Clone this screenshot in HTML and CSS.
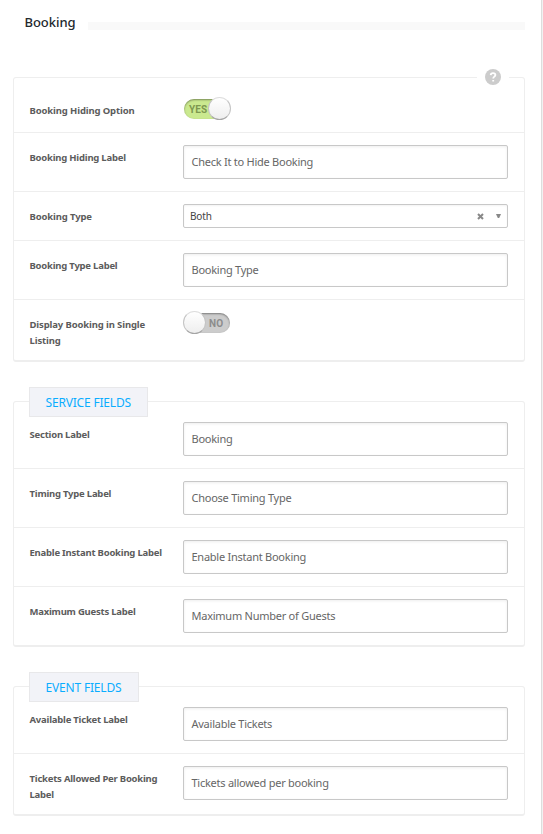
FILE: index.html
```html
<!DOCTYPE html>
<html lang="en">
<head>
<meta charset="utf-8">
<title>Booking</title>
<link rel="stylesheet" href="styles.css">
</head>
<body>
<main class="page">
  <header class="heading"><h1>Booking</h1><span class="rule"></span></header>

  <section class="panel panel-main">
    <span class="help"><svg width="16" height="16" viewBox="0 0 16 16"><circle cx="8" cy="8" r="8" fill="#ccc"/><path d="M5.7 6.1C5.8 4.8 6.7 4.1 8 4.1C9.4 4.1 10.4 4.9 10.4 6.1C10.4 7.6 8.2 7.7 8.2 9.5M8.2 10.9V12.5" fill="none" stroke="#fff" stroke-width="1.8"/></svg></span>
    <div class="row row-toggle">
      <span class="label wide">Booking Hiding Option</span>
      <div class="toggle on"><span class="state">YES</span><span class="knob"></span></div>
    </div>
    <div class="row"><label class="label">Booking Hiding Label</label><div class="input">Check It to Hide Booking</div></div>
    <div class="row row-select">
      <span class="label wide">Booking Type</span>
      <div class="select"><span>Both</span>
        <svg class="clear" width="7" height="7" viewBox="0 0 7 7"><path d="M1 1L6 6M6 1L1 6" stroke="#888" stroke-width="2"/></svg>
        <svg class="arrow" width="5" height="4" viewBox="0 0 5 4"><path d="M0 0H5L3.2 4H1.8Z" fill="#888"/></svg>
      </div>
    </div>
    <div class="row"><label class="label">Booking Type Label</label><div class="input">Booking Type</div></div>
    <div class="row row-tall">
      <span class="label wide">Display Booking in Single Listing</span>
      <div class="toggle off"><span class="knob"></span><span class="state">NO</span></div>
    </div>
  </section>

  <section class="panel">
    <h2 class="legend service">SERVICE FIELDS</h2>
    <div class="row"><label class="label">Section Label</label><div class="input">Booking</div></div>
    <div class="row"><label class="label">Timing Type Label</label><div class="input">Choose Timing Type</div></div>
    <div class="row"><label class="label">Enable Instant Booking Label</label><div class="input">Enable Instant Booking</div></div>
    <div class="row"><label class="label">Maximum Guests Label</label><div class="input">Maximum Number of Guests</div></div>
  </section>

  <section class="panel">
    <h2 class="legend event">EVENT FIELDS</h2>
    <div class="row"><label class="label">Available Ticket Label</label><div class="input">Available Tickets</div></div>
    <div class="row row-tall"><label class="label">Tickets Allowed Per Booking Label</label><div class="input">Tickets allowed per booking</div></div>
  </section>
</main>
</body>
</html>
```
FILE: styles.css
```css
* { box-sizing: border-box; }
body { margin: 0; background: #f1f1f1; font-family: "Noto Sans", "Open Sans", sans-serif; color: #5c5c5c; }
.page { width: 542px; height: 834px; overflow: hidden; background: #fff; border-right: 1px solid #ddd; padding: 0 16px 0 13px; }
.heading { display: flex; height: 77px; padding: 12px 0 0 11.5px; }
h1 { margin: 0; width: 63.5px; font-size: 13px; line-height: 20px; font-weight: 500; color: #23282d; letter-spacing: -.05px; white-space: nowrap; }
.rule { flex: 1; height: 8px; margin-top: 10px; background: #f9f9f9; }
.panel { position: relative; width: 512px; margin-bottom: 39px; border: 1px solid #eee; border-bottom-width: 2px; border-radius: 3px; }
.row { display: flex; height: 59px; padding: 12px 16px 0 15.5px; border-bottom: 1px solid #eee; }
.row:last-child { border-bottom: 0; }
.legend + .row { height: 67px; padding-top: 20px; }
.row-toggle { height: 55px; padding-top: 20px; }
.row-select { height: 49px; }
.row-tall { height: 60px; }
.panel .row:last-child:not(.row-tall) { height: 58px; }
.label { width: 153.5px; padding: 5px 15px 0 0; font-size: 9.5px; line-height: 16px; font-weight: 700; letter-spacing: -.22px; }
.wide { letter-spacing: -.13px; }
.input { width: 325px; height: 34px; padding: 0 7.5px; border: 1px solid #c8c8c8; border-radius: 2px; box-shadow: inset 0 1px 3px rgba(0,0,0,.07); font-size: 11px; line-height: 32px; letter-spacing: -.25px; color: #666; }
.select { display: flex; align-items: center; width: 325px; height: 24px; padding: 0 6px; border: 1px solid #c8c8c8; border-radius: 2px; box-shadow: inset 0 1px 2px rgba(0,0,0,.05); font-size: 10px; letter-spacing: -.15px; color: #444; }
.clear { margin-left: auto; }
.arrow { margin-left: 12px; }
.toggle { display: flex; position: relative; width: 48px; height: 22px; padding: 1px 0 0 1px; }
.toggle::before { content: ""; width: 46px; height: 20px; border-radius: 10px; }
.on::before { background: #cae98f; box-shadow: inset 0 1px 2px rgba(0,0,0,.4); }
.off::before { background: #ccc; box-shadow: inset 0 1px 2px rgba(0,0,0,.4); }
.state { position: absolute; left: 6px; top: 5px; font: 700 10px/13px Roboto, sans-serif; letter-spacing: .1px; color: #7d9850; }
.off .state { left: 26px; color: #8c8c8c; }
.knob { position: absolute; left: 25px; top: -1px; width: 23px; height: 23px; border-radius: 50%; border: 1px solid #c4c4c4; border-top-color: #ddd; border-bottom-color: #a5a5a5; background: linear-gradient(#fff, #eee); }
.off .knob { left: 0; }
.legend { position: absolute; left: 15px; top: -15px; height: 30px; margin: 0; border: 1px solid #e8e8ea; background: #f2f3f8; padding-left: 15.5px; font-size: 12px; line-height: 29px; font-weight: 400; letter-spacing: -.18px; color: #0aadff; white-space: nowrap; }
.service { width: 119px; }
.event { width: 110px; }
.help { position: absolute; left: 463px; top: -9px; width: 32px; height: 16px; padding-left: 8px; background: #fff; }
.help svg { display: block; }
```
